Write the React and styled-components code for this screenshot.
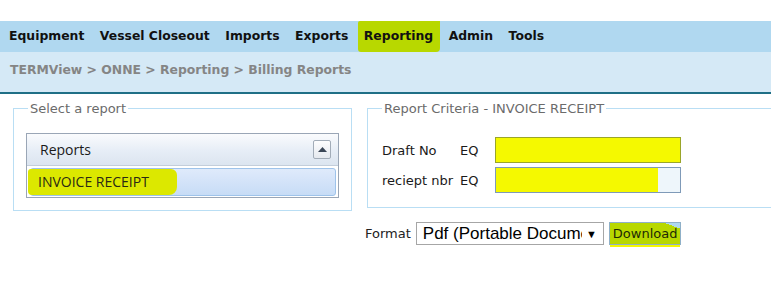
import styled, { createGlobalStyle } from "styled-components";

const GlobalStyle = createGlobalStyle`
  html, body {
    margin: 0;
    padding: 0;
    background: #fff;
    font-family: "DejaVu Sans", Verdana, sans-serif;
  }
`;

const navItems = ["Equipment", "Vessel Closeout", "Imports", "Exports", "Reporting", "Admin", "Tools"];

export default function App() {
  return (
    <>
      <GlobalStyle />
      <Page>
        <NavBar>
          {navItems.map((item) => (
            <NavItem key={item} $marked={item === "Reporting"}>
              {item}
            </NavItem>
          ))}
        </NavBar>
        <Crumbs>TERMView &gt; ONNE &gt; Reporting &gt; Billing Reports</Crumbs>

        <Content>
          <Box $width="339px" $height="110px">
            <Legend>Select a report</Legend>
            <Accordion>
              <AccHeader>
                <span>Reports</span>
                <Toggle>
                  <svg width="9" height="5" viewBox="0 0 9 5">
                    <path d="M0 5 L4.5 0 L9 5 Z" fill="#3a4656" />
                  </svg>
                </Toggle>
              </AccHeader>
              <AccItem>
                <Marker>INVOICE RECEIPT</Marker>
              </AccItem>
            </Accordion>
          </Box>

          <RightCol>
            <Box $width="420px" $height="107px">
              <Legend>Report Criteria - INVOICE RECEIPT</Legend>
              <Criteria>
                <span>Draft No</span>
                <span>EQ</span>
                <Field $marked />
                <span>reciept nbr</span>
                <span>EQ</span>
                <Field $marked $partial />
              </Criteria>
            </Box>
            <FormatRow>
              <span>Format</span>
              <Select>
                <SelectText>Pdf (Portable Document Format)</SelectText>
                <Arrow>▼</Arrow>
              </Select>
              <DownloadButton>Download</DownloadButton>
            </FormatRow>
          </RightCol>
        </Content>
      </Page>
    </>
  );
}

const Page = styled.div`
  width: 771px;
  height: 286px;
  padding-top: 21px;
  box-sizing: border-box;
  overflow: hidden;
`;

const NavBar = styled.div`
  display: flex;
  height: 31px;
  align-items: center;
  background: #b0d8f0;
  padding-left: 3px;
  gap: 2.5px;
`;

const NavItem = styled.div`
  font-weight: bold;
  font-size: 12.4px;
  color: #111;
  padding: 0 7px 0 6px;
  height: 31px;
  line-height: 30px;
  background: ${(p) => (p.$marked ? "#b8d800" : "transparent")};
  border-radius: ${(p) => (p.$marked ? "2px 0 4px 3px" : "0")};
`;

const Crumbs = styled.div`
  height: 40px;
  line-height: 36px;
  background: #d5e9f6;
  border-bottom: 2px solid #1f6f86;
  padding-left: 10px;
  font-size: 12.4px;
  font-weight: bold;
  color: #858585;
`;

const Content = styled.div`
  display: flex;
  align-items: flex-start;
  gap: 15px;
  padding: 7px 0 0 13px;
`;

const Box = styled.fieldset`
  position: relative;
  margin: 0;
  flex-shrink: 0;
  width: ${(p) => p.$width};
  height: ${(p) => p.$height};
  box-sizing: border-box;
  border: 1px solid #b9def4;
  padding: 0 12px;
`;

const Legend = styled.legend`
  font-size: 13px;
  color: #6b6b6b;
  padding: 0 2px;
  margin-left: 2px;
`;

const Accordion = styled.div`
  margin-top: 17px;
  border: 1px solid #9aa6b6;
  padding-bottom: 1px;
`;

const AccHeader = styled.div`
  display: flex;
  justify-content: space-between;
  align-items: center;
  height: 31px;
  padding: 0 7px 0 13px;
  font-family: "Open Sans", "DejaVu Sans", sans-serif;
  font-size: 14px;
  color: #1a1a1a;
  background: linear-gradient(#fafbfd, #e6edf6 55%, #dce5f0);
  border-bottom: 1px solid #c3cedb;
`;

const Toggle = styled.div`
  width: 16px;
  height: 17px;
  display: flex;
  align-items: center;
  justify-content: center;
  border: 1px solid #a2acb8;
  border-radius: 2px;
  background: linear-gradient(#fdfdfe, #e5e9ef);
`;

const AccItem = styled.div`
  margin: 2px 2px 0 3px;
  height: 26px;
  border: 1px solid #9ec3ea;
  border-radius: 3px;
  background: linear-gradient(#dfeafb, #c7dcf6);
  display: flex;
  align-items: center;
`;

const Marker = styled.span`
  font-family: "Open Sans", "DejaVu Sans", sans-serif;
  font-size: 14px;
  color: #2a2a14;
  background: #dce800;
  padding: 3px 28px 4px 10px;
  margin-left: -3px;
  border-radius: 3px 6px 8px 4px;
`;

const RightCol = styled.div`
  display: flex;
  flex-direction: column;
  flex-shrink: 0;
  width: 420px;
`;

const Criteria = styled.div`
  display: grid;
  grid-template-columns: 78px 35px 186px;
  row-gap: 4px;
  align-items: center;
  margin-top: 21px;
  padding-left: 2px;
  font-size: 13px;
  color: #1a1a1a;
`;

const Field = styled.div`
  height: 26px;
  box-sizing: border-box;
  border: 1px solid ${(p) => (p.$partial ? "#7f9ab8" : "#9aa52a")};
  background: ${(p) =>
    p.$partial
      ? "linear-gradient(90deg, #f5f900 88%, #eef6fb 88%)"
      : "#f5f900"};
`;

const FormatRow = styled.div`
  display: flex;
  align-items: center;
  gap: 5px;
  margin-top: 14px;
  margin-left: -2px;
  font-size: 13px;
  color: #222;
`;

const Select = styled.div`
  width: 188px;
  height: 23px;
  box-sizing: border-box;
  border: 1px solid #a6a6a6;
  display: flex;
  align-items: center;
  padding: 0 6px 0 6px;
  font-family: "Liberation Sans", Arial, sans-serif;
  font-size: 17px;
  color: #000;
`;

const SelectText = styled.span`
  width: 160px;
  overflow: hidden;
  white-space: nowrap;
  text-overflow: clip;
`;

const Arrow = styled.span`
  font-size: 11px;
  margin-left: 4px;
`;

const DownloadButton = styled.button`
  height: 23px;
  padding: 0 3px;
  border: 1px solid #8fb0c8;
  background: linear-gradient(200deg, #b0d8f0 12%, #b8d800 12%);
  font-family: "DejaVu Sans", Verdana, sans-serif;
  font-size: 13px;
  color: #1e2a05;
  box-shadow: 0 3px 0 -1px #f3f800;
`;
